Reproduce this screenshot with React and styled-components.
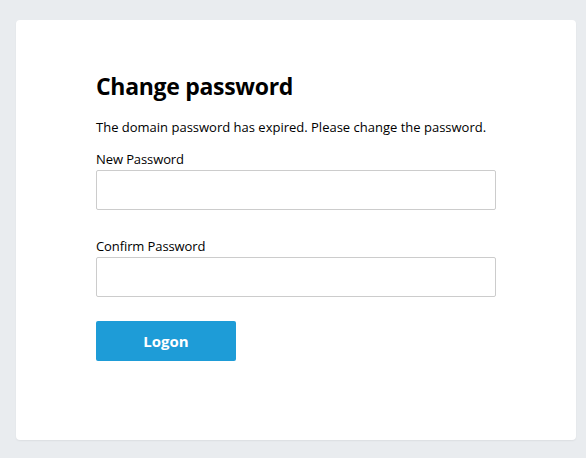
import React from "react";
import styled, { createGlobalStyle } from "styled-components";

const Global = createGlobalStyle`
  html, body { margin: 0; padding: 0; }
  body {
    background: #e9ecef;
    font-family: "Open Sans", "Noto Sans", "Liberation Sans", sans-serif;
    color: #000;
  }
`;

const Page = styled.div`
  padding: 20px 10px 18px 16px;
  width: 586px;
  height: 458px;
  box-sizing: border-box;
`;

const Card = styled.div`
  width: 560px;
  height: 420px;
  box-sizing: border-box;
  background: #fff;
  border-radius: 4px;
  box-shadow: 0 1px 2px rgba(0, 0, 0, 0.06);
  padding: 50px 80px 0 80px;
`;

const Title = styled.h1`
  margin: 0;
  font-size: 23px;
  font-weight: 700;
  line-height: 32px;
  letter-spacing: -0.3px;
`;

const Desc = styled.p`
  margin: 15px 0 0;
  font-size: 13px;
  line-height: 20px;
  letter-spacing: 0px;
`;

const Field = styled.div`
  display: flex;
  flex-direction: column;
  margin-top: ${(p) => p.$top}px;
`;

const Label = styled.label`
  font-size: 13px;
  line-height: 18px;
  margin-bottom: 2px;
  letter-spacing: -0.1px;
`;

const Input = styled.input`
  width: 400px;
  height: 40px;
  box-sizing: border-box;
  border: 1px solid #cccccc;
  border-radius: 2px;
  outline: none;
  padding: 0 10px;
  font: inherit;
`;

const Button = styled.button`
  margin-top: 24px;
  width: 140px;
  height: 40px;
  border: none;
  border-radius: 2px;
  background: #1e9cd7;
  color: #fff;
  font-family: inherit;
  font-size: 15px;
  font-weight: 700;
  cursor: pointer;
`;

export default function App() {
  return (
    <>
      <Global />
      <Page>
        <Card>
          <Title>Change password</Title>
          <Desc>The domain password has expired. Please change the password.</Desc>
          <Field $top={13}>
            <Label>New Password</Label>
            <Input type="password" />
          </Field>
          <Field $top={27}>
            <Label>Confirm Password</Label>
            <Input type="password" />
          </Field>
          <Button>Logon</Button>
        </Card>
      </Page>
    </>
  );
}
